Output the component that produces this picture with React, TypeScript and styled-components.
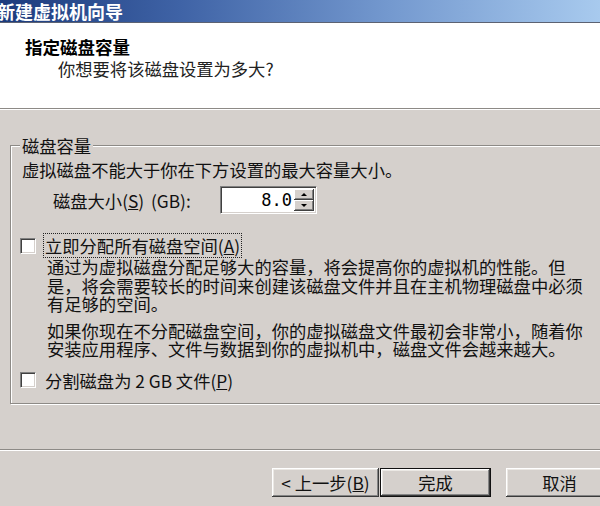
import React from 'react';
import styled, { createGlobalStyle } from 'styled-components';

const Global = createGlobalStyle`
  html, body { margin: 0; padding: 0; background: #d5d0cc; }
  body { font-family: "Noto Sans CJK SC", "Liberation Sans", sans-serif; }
`;

const FACE = '#d5d0cc';
const FONT = '"Noto Sans CJK SC", "Liberation Sans", sans-serif';

const Dialog = styled.div`
  width: 600px;
  height: 506px;
  overflow: hidden;
  background: ${FACE};
  display: flex;
  flex-direction: column;
  font-family: ${FONT};
  font-size: 17.3px;
  color: #111;
`;

const TitleBar = styled.div`
  flex: none;
  height: 22px;
  border-bottom: 1px solid #5c6272;
  background: linear-gradient(90deg, #1b3a7c 0%, #3f63a6 30%, #7499cf 65%, #a8caee 100%);
  display: flex;
  align-items: center;
  overflow: hidden;
`;

const TitleText = styled.span`
  margin-left: -3px;
  color: #fff;
  font-weight: 700;
  font-size: 18px;
  line-height: 22px;
  white-space: nowrap;
`;

const Header = styled.div`
  flex: none;
  height: 85px;
  box-sizing: border-box;
  background: #fff;
  padding: 14px 0 0 25px;
`;

const HeaderTitle = styled.div`
  font-weight: 700;
  font-size: 17.5px;
  line-height: 20px;
  color: #000;
`;

const HeaderSub = styled.div`
  margin-left: 33px;
  font-size: 17.3px;
  line-height: 23px;
  color: #222;
`;

const Etched = styled.div`
  flex: none;
  height: 0;
  border-top: 1px solid #8d8a86;
  border-bottom: 1px solid #fff;
`;

const Body = styled.div`
  flex: 1;
  display: flex;
  flex-direction: column;
`;

const GroupBox = styled.div`
  position: relative;
  margin: 35px -40px 0 10px;
  padding: 14px 0 10px 11px;
  border: 1px solid #8d8a86;
  box-shadow: inset 1px 1px 0 #fff, 1px 1px 0 #fff;
`;

const Legend = styled.span`
  position: absolute;
  top: -10px;
  left: 9px;
  padding: 0 2px;
  background: ${FACE};
  line-height: 19px;
  white-space: nowrap;
`;

const Line = styled.div`
  line-height: 19px;
  white-space: nowrap;
`;

const SizeRow = styled.div`
  margin-top: 7px;
  padding-left: 31px;
  display: flex;
  align-items: center;
  height: 28px;
`;

const SizeLabel = styled.span`
  width: 167px;
  flex: none;
  white-space: nowrap;
  word-spacing: 3px;
`;

const SpinField = styled.div`
  width: 97px;
  height: 28px;
  box-sizing: border-box;
  display: flex;
  background: #fff;
  border-top: 1px solid #808080;
  border-left: 1px solid #808080;
  border-right: 1px solid #fff;
  border-bottom: 1px solid #fff;
  box-shadow: inset 1px 1px 0 #404040, inset -1px -1px 0 ${FACE};
  padding: 2px;
`;

const SpinValue = styled.span`
  flex: 1;
  text-align: right;
  padding-right: 2px;
  font-family: "DejaVu Sans Mono", "Liberation Mono", monospace;
  font-size: 17px;
  line-height: 22px;
  color: #000;
`;

const SpinButtons = styled.div`
  width: 20px;
  display: flex;
  flex-direction: column;
`;

const SpinBtn = styled.div`
  flex: 1;
  background: ${FACE};
  box-shadow: inset -1px -1px 0 #404040, inset 1px 1px 0 #fff, inset -2px -2px 0 #808080;
  display: flex;
  align-items: center;
  justify-content: center;
`;

const Arrow = styled.span<{ $up?: boolean }>`
  width: 0;
  height: 0;
  border-left: 3px solid transparent;
  border-right: 3px solid transparent;
  ${(p) => (p.$up ? 'border-bottom: 3px solid #000;' : 'border-top: 3px solid #000;')}
`;

const CheckRow = styled.label<{ $gap: number }>`
  margin-top: ${(p) => p.$gap}px;
  margin-left: -2px;
  display: flex;
  align-items: center;
  height: 25px;
`;

const CheckBox = styled.span`
  width: 16px;
  height: 16px;
  flex: none;
  box-sizing: border-box;
  background: #fff;
  border-top: 1px solid #808080;
  border-left: 1px solid #808080;
  border-right: 1px solid #fff;
  border-bottom: 1px solid #fff;
  box-shadow: inset 1px 1px 0 #404040, inset -1px -1px 0 ${FACE};
`;

const CheckText = styled.span<{ $focus?: boolean }>`
  margin-left: 7px;
  padding: 2px 1px;
  border: 1px dotted ${(p) => (p.$focus ? '#222' : 'transparent')};
  line-height: 19px;
  white-space: nowrap;
`;

const Para = styled.p<{ $gap: number }>`
  margin: ${(p) => p.$gap}px 0 0 25px;
  line-height: 18.5px;
  white-space: nowrap;
`;

const Footer = styled.div`
  margin-top: 45px;
  display: flex;
  flex-direction: column;
`;

const ButtonRow = styled.div`
  margin-top: 17px;
  padding-left: 272px;
  display: flex;
  gap: 1px;
`;

const Button = styled.button<{ $default?: boolean; $gap?: number }>`
  width: ${(p) => (p.$default ? '111px' : '107px')};
  height: 29px;
  flex: none;
  margin-left: ${(p) => p.$gap || 0}px;
  padding: 0;
  font-family: ${FONT};
  font-size: 17.3px;
  color: #111;
  background: ${FACE};
  border: ${(p) => (p.$default ? '1px solid #111' : 'none')};
  box-shadow: inset -1px -1px 0 #3a3a3a, inset 1px 1px 0 #fff, inset -2px -2px 0 #858585, inset 2px 2px 0 #ebe8e4;
  display: flex;
  align-items: center;
  justify-content: center;
`;

export default function App() {
  return (
    <>
      <Global />
      <Dialog>
        <TitleBar>
          <TitleText>新建虚拟机向导</TitleText>
        </TitleBar>
        <Header>
          <HeaderTitle>指定磁盘容量</HeaderTitle>
          <HeaderSub>你想要将该磁盘设置为多大?</HeaderSub>
        </Header>
        <Etched />
        <Body>
          <GroupBox>
            <Legend>磁盘容量</Legend>
            <Line>虚拟磁盘不能大于你在下方设置的最大容量大小。</Line>
            <SizeRow>
              <SizeLabel>
                磁盘大小(<u>S</u>) (GB):
              </SizeLabel>
              <SpinField>
                <SpinValue>8.0</SpinValue>
                <SpinButtons>
                  <SpinBtn>
                    <Arrow $up />
                  </SpinBtn>
                  <SpinBtn>
                    <Arrow />
                  </SpinBtn>
                </SpinButtons>
              </SpinField>
            </SizeRow>
            <CheckRow $gap={19}>
              <CheckBox />
              <CheckText $focus>
                立即分配所有磁盘空间(<u>A</u>)
              </CheckText>
            </CheckRow>
            <Para $gap={0}>
              通过为虚拟磁盘分配足够大的容量，将会提高你的虚拟机的性能。但
              <br />
              是，将会需要较长的时间来创建该磁盘文件并且在主机物理磁盘中必须
              <br />
              有足够的空间。
            </Para>
            <Para $gap={8}>
              如果你现在不分配磁盘空间，你的虚拟磁盘文件最初会非常小，随着你
              <br />
              安装应用程序、文件与数据到你的虚拟机中，磁盘文件会越来越大。
            </Para>
            <CheckRow $gap={9}>
              <CheckBox />
              <CheckText>
                分割磁盘为 2 GB 文件(<u>P</u>)
              </CheckText>
            </CheckRow>
          </GroupBox>
          <Footer>
            <Etched />
            <ButtonRow>
              <Button>
                &lt; 上一步(<u>B</u>)
              </Button>
              <Button $default>完成</Button>
              <Button $gap={14}>取消</Button>
            </ButtonRow>
          </Footer>
        </Body>
      </Dialog>
    </>
  );
}
